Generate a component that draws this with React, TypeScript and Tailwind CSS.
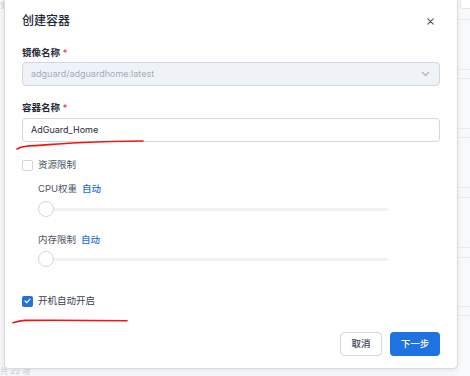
import { FC } from "react";

const font = { fontFamily: "Inter, 'Noto Sans CJK SC', sans-serif" };

const bgRows = [19, 69, 78, 128, 137, 187, 197, 247, 257, 306, 315];

const Slider: FC = () => (
    <div className="relative mt-[5px] ml-[16px] h-[16px] w-[350px]">
        <div className="absolute left-0 right-0 top-[7px] h-[3px] rounded-full bg-[#f0f1f3]" />
        <div className="absolute left-0 top-0 h-[16px] w-[16px] rounded-full border border-[#cfd8e3] bg-white" />
    </div>
);

const App: FC = () => {
    return (
        <div className="relative h-[376px] w-[470px] overflow-hidden bg-[#f5f6f7]" style={font}>
            {/* page behind the dialog */}
            <div className="absolute right-0 top-0 h-full w-[12px] bg-[#f8f9fa]">
                {bgRows.map((y) => (
                    <div key={y} className="absolute left-0 right-0 h-px bg-[#e9ebee]" style={{ top: y }} />
                ))}
                <div className="absolute left-[2px] top-[-4px] h-[13px] w-[20px] rounded-[3px] border border-[#e2e5e9] bg-white" />
            </div>
            <div className="absolute left-0 top-0 text-[8px] leading-[10px] text-[#c9ccd1]">安</div>
            <div className="absolute bottom-0 left-0 text-[8px] leading-[9px] text-[#c9ccd1]">共 22 项</div>

            {/* dialog */}
            <div className="absolute left-[4px] top-0 flex h-[369px] w-[454px] flex-col rounded-b-[5px] border border-t-0 border-[#d9dbdf] bg-white px-[17px] shadow-[0_1px_4px_rgba(0,0,0,0.08)]">
                <div className="mt-[12px] flex h-[18px] items-center justify-between">
                    <span className="text-[12px] font-medium text-[#1f2937]">创建容器</span>
                    <svg width="7" height="7" viewBox="0 0 7 7" className="mr-[6px]">
                        <path d="M0.8 0.8L6.2 6.2M6.2 0.8L0.8 6.2" stroke="#4b5563" strokeWidth="1.1" strokeLinecap="round" />
                    </svg>
                </div>

                <div className="mt-[16px] h-[14px] text-[9.5px] font-semibold leading-[14px] text-[#1f2937]">
                    镜像名称 <span className="text-[#ef4444]">*</span>
                </div>
                <div className="mt-[2px] flex h-[24px] items-center justify-between rounded-[4px] border border-[#cfd8e3] bg-[#eff3f8] pl-[8px] pr-[9px]">
                    <span className="text-[9px] text-[#a3adbb]">adguard/adguardhome:latest</span>
                    <svg width="9" height="6" viewBox="0 0 9 6">
                        <path d="M1 1L4.5 4.5L8 1" fill="none" stroke="#a3adbb" strokeWidth="1.1" />
                    </svg>
                </div>

                <div className="mt-[15px] h-[14px] text-[9.5px] font-semibold leading-[14px] text-[#1f2937]">
                    容器名称 <span className="text-[#ef4444]">*</span>
                </div>
                <div className="mt-[3px] flex h-[24px] items-center rounded-[4px] border border-[#cfd8e3] bg-white pl-[8px]">
                    <span className="text-[9px] text-[#1f2937]">AdGuard_Home</span>
                </div>

                <div className="mt-[16px] flex h-[14px] items-center gap-[5px]">
                    <div className="h-[11px] w-[11px] rounded-[2px] border border-[#cfd6df] bg-white" />
                    <span className="text-[9.5px] text-[#4b5563]">资源限制</span>
                </div>

                <div className="mt-[10px] ml-[16px] flex h-[14px] items-center gap-[5px] text-[9.5px]">
                    <span className="text-[#4b5563]">CPU权重</span>
                    <span className="font-medium text-[#1f6fdc]">自动</span>
                </div>
                <Slider />

                <div className="mt-[16px] ml-[16px] flex h-[14px] items-center gap-[5px] text-[9.5px]">
                    <span className="text-[#4b5563]">内存限制</span>
                    <span className="font-medium text-[#1f6fdc]">自动</span>
                </div>
                <div className="mt-[-1px]">
                    <Slider />
                </div>

                <div className="mt-[27px] flex h-[14px] items-center gap-[5px]">
                    <div className="flex h-[11px] w-[11px] items-center justify-center rounded-[2px] bg-[#2371dc]">
                        <svg width="7" height="6" viewBox="0 0 7 6">
                            <path d="M1 3L2.8 4.7L6 1.2" fill="none" stroke="white" strokeWidth="1.2" strokeLinecap="round" strokeLinejoin="round" />
                        </svg>
                    </div>
                    <span className="text-[9.5px] text-[#374151]">开机自动开启</span>
                </div>

                <div className="mt-[24px] flex justify-end gap-[8px]">
                    <button className="h-[24px] w-[42px] rounded-[4px] border border-[#cfd6df] bg-white text-[9.5px] font-medium text-[#374151]">
                        取消
                    </button>
                    <button className="h-[24px] w-[50px] rounded-[4px] bg-[#1f73e0] text-[9.5px] font-medium text-white">
                        下一步
                    </button>
                </div>
            </div>

            {/* red annotation marks */}
            <svg className="pointer-events-none absolute left-0 top-0" width="470" height="376">
                <path d="M17 149 C20 147 23 146.5 26 146.2 C45 145 62 143.5 78 142.7 C100 141.8 120 141.2 143 141" fill="none" stroke="#ff1010" strokeWidth="1.6" strokeLinecap="round" />
                <path d="M13 322.7 C17 321.5 21 320.6 25 320.4 C60 320.2 95 320.4 127 320.8" fill="none" stroke="#ff1010" strokeWidth="1.6" strokeLinecap="round" />
            </svg>
        </div>
    );
};

export default App;
